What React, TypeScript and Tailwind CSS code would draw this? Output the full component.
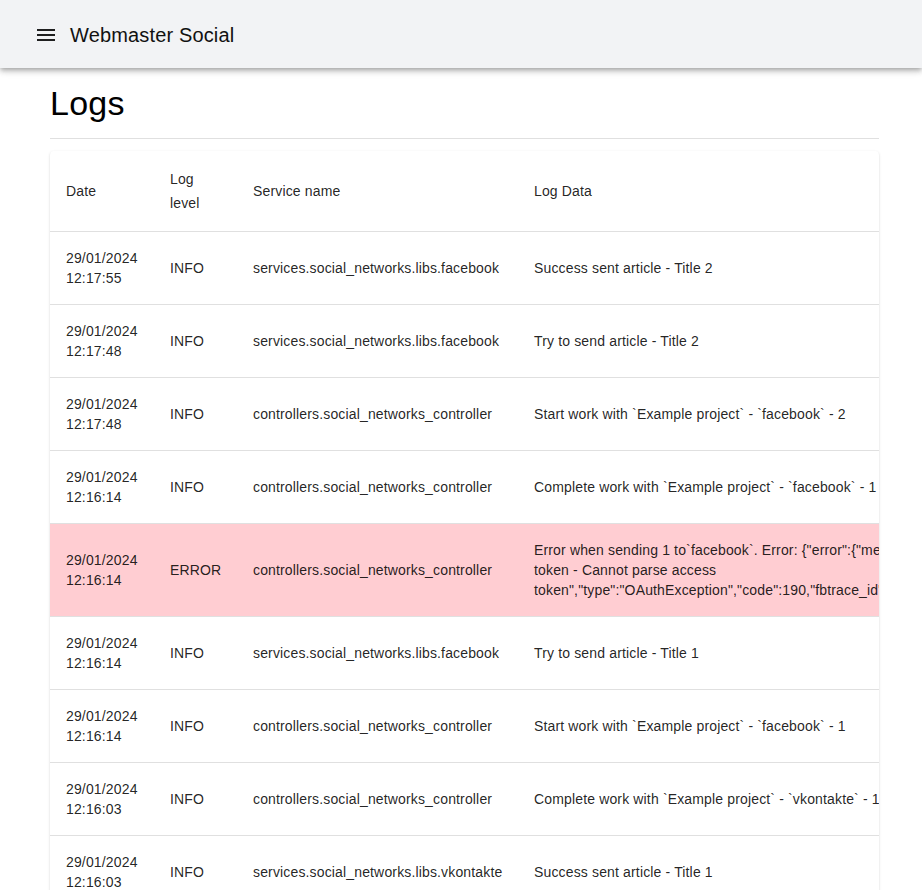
import React from "react";

type Row = { date: string; time: string; level: string; service: string; data: string[] };

const rows: Row[] = [
  { date: "29/01/2024", time: "12:17:55", level: "INFO", service: "services.social_networks.libs.facebook", data: ["Success sent article - Title 2"] },
  { date: "29/01/2024", time: "12:17:48", level: "INFO", service: "services.social_networks.libs.facebook", data: ["Try to send article - Title 2"] },
  { date: "29/01/2024", time: "12:17:48", level: "INFO", service: "controllers.social_networks_controller", data: ["Start work with `Example project` - `facebook` - 2"] },
  { date: "29/01/2024", time: "12:16:14", level: "INFO", service: "controllers.social_networks_controller", data: ["Complete work with `Example project` - `facebook` - 1"] },
  {
    date: "29/01/2024",
    time: "12:16:14",
    level: "ERROR",
    service: "controllers.social_networks_controller",
    data: [
      'Error when sending 1 to`facebook`. Error: {"error":{"message":"Invalid OAuth access',
      "token - Cannot parse access",
      'token","type":"OAuthException","code":190,"fbtrace_id":"AqK3xY7bZpL2mN9rT4vW1cD"}}',
    ],
  },
  { date: "29/01/2024", time: "12:16:14", level: "INFO", service: "services.social_networks.libs.facebook", data: ["Try to send article - Title 1"] },
  { date: "29/01/2024", time: "12:16:14", level: "INFO", service: "controllers.social_networks_controller", data: ["Start work with `Example project` - `facebook` - 1"] },
  { date: "29/01/2024", time: "12:16:03", level: "INFO", service: "controllers.social_networks_controller", data: ["Complete work with `Example project` - `vkontakte` - 1"] },
  { date: "29/01/2024", time: "12:16:03", level: "INFO", service: "services.social_networks.libs.vkontakte", data: ["Success sent article - Title 1"] },
  { date: "29/01/2024", time: "12:16:02", level: "INFO", service: "services.social_networks.libs.vkontakte", data: ["Try to send article - Title 1"] },
];

export default function App() {
  return (
    <div className="min-h-screen bg-white font-['Liberation_Sans',Arial,sans-serif] text-[rgba(0,0,0,0.87)]">
      <header className="h-[68px] bg-[#f2f3f5] shadow-[0_2px_4px_-1px_rgba(0,0,0,0.2),0_4px_5px_0_rgba(0,0,0,0.14),0_1px_10px_0_rgba(0,0,0,0.12)] flex items-center pl-[34px] pt-[2px] relative z-10">
        <svg width="24" height="24" viewBox="0 0 24 24" className="fill-[#1f1f1f]">
          <path d="M3 18h18v-2H3v2zm0-5h18v-2H3v2zm0-7v2h18V6H3z" />
        </svg>
        <span className="ml-[12px] text-[20px] leading-[32px] tracking-[0.0075em] text-[#111]">Webmaster Social</span>
      </header>
      <main className="pl-[50px] pr-[43px]">
        <h1 className="pt-[14px] text-[34px] leading-[42px] tracking-[0.00735em] font-normal text-black">Logs</h1>
        <div className="mt-[14px] h-px bg-[#e0e0e0]" />
        <div className="mt-[12px] rounded-[4px] bg-white overflow-hidden shadow-[0_2px_1px_-1px_rgba(0,0,0,0.2),0_1px_1px_0_rgba(0,0,0,0.14),0_1px_3px_0_rgba(0,0,0,0.12)]">
          <table className="table-fixed border-collapse w-[1100px] text-[14px] tracking-[0.01071em]">
            <colgroup>
              <col className="w-[104px]" />
              <col className="w-[83px]" />
              <col className="w-[281px]" />
              <col className="w-[632px]" />
            </colgroup>
            <thead>
              <tr className="border-b border-[#e0e0e0]">
                <th className="p-4 text-left font-normal leading-[24px] align-middle">Date</th>
                <th className="p-4 text-left font-normal leading-[24px] align-middle">Log level</th>
                <th className="p-4 text-left font-normal leading-[24px] align-middle">Service name</th>
                <th className="p-4 text-left font-normal leading-[24px] align-middle">Log Data</th>
              </tr>
            </thead>
            <tbody>
              {rows.map((r, i) => (
                <tr
                  key={i}
                  className={`border-b border-[#e0e0e0] ${r.level === "ERROR" ? "bg-[#ffcdd2]" : ""}`}
                >
                  <td className="p-4 leading-[20px] align-middle">
                    <div>{r.date}</div>
                    <div>{r.time}</div>
                  </td>
                  <td className="p-4 leading-[20px] align-middle">{r.level}</td>
                  <td className="p-4 leading-[20px] align-middle whitespace-nowrap">{r.service}</td>
                  <td className="p-4 leading-[20px] align-middle">
                    {r.data.map((l, j) => (
                      <div key={j} className="whitespace-nowrap">{l}</div>
                    ))}
                  </td>
                </tr>
              ))}
            </tbody>
          </table>
        </div>
      </main>
    </div>
  );
}
